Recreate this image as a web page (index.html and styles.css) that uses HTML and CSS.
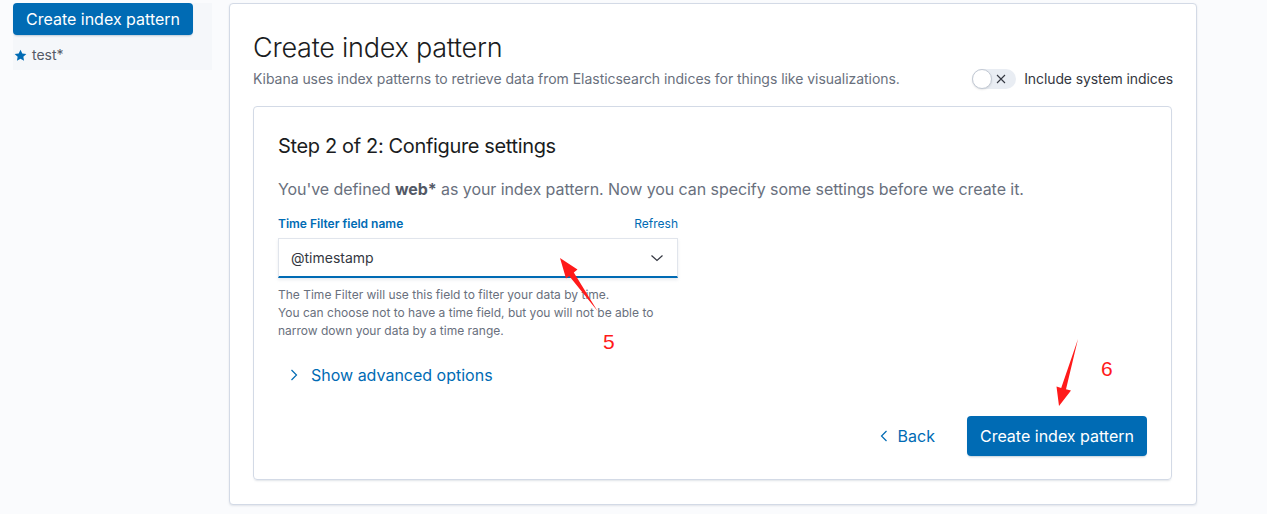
FILE: index.html
```html
<!DOCTYPE html>
<html lang="en">

<head>
    <meta charset="UTF-8">
    <title>Create index pattern</title>
    <link rel="stylesheet" href="styles.css">
</head>

<body>
    <div class="page">
        <aside class="sidebar">
            <button class="button button-small">Create index pattern</button>
            <div class="pattern-item">
                <svg class="star" width="13" height="13" viewBox="0 0 16 16">
                    <path d="M8 0.8l2.2 4.6 5 .6-3.7 3.5.9 5L8 12.1 3.6 14.5l.9-5L.8 6l5-.6z" fill="#006bb4"/>
                </svg>
                <span>test*</span>
            </div>
        </aside>

        <main class="panel">
            <div class="page-header">
                <div>
                    <h1 class="title">Create index pattern</h1>
                    <p class="subtitle">Kibana uses index patterns to retrieve data from Elasticsearch indices for things like visualizations.</p>
                </div>
                <label class="switch">
                    <span class="switch-track">
                        <span class="switch-knob"></span>
                        <svg class="switch-icon" width="12" height="12" viewBox="0 0 12 12">
                            <path d="M2 2l8 8M10 2l-8 8" stroke="#343741" stroke-width="1.1" fill="none"/>
                        </svg>
                    </span>
                    <span class="switch-label">Include system indices</span>
                </label>
            </div>

            <section class="step-panel">
                <h2 class="step-title">Step 2 of 2: Configure settings</h2>
                <p class="step-desc">You've defined <b>web*</b> as your index pattern. Now you can specify some settings before we create it.</p>

                <div class="form-row">
                    <div class="form-label-row">
                        <span class="form-label">Time Filter field name</span>
                        <a class="link-small">Refresh</a>
                    </div>
                    <div class="select">
                        <span>@timestamp</span>
                        <svg width="14" height="14" viewBox="0 0 14 14">
                            <path d="M1.5 4.5l5.5 5 5.5-5" stroke="#343741" stroke-width="1.2" fill="none"/>
                        </svg>
                    </div>
                    <div class="help">
                        The Time Filter will use this field to filter your data by time.<br>
                        You can choose not to have a time field, but you will not be able to<br>
                        narrow down your data by a time range.
                    </div>
                </div>

                <button class="button-empty advanced">
                    <svg width="16" height="16" viewBox="0 0 16 16">
                        <path d="M5.5 3l5 5-5 5" stroke="#006bb4" stroke-width="1.2" fill="none"/>
                    </svg>
                    <span>Show advanced options</span>
                </button>

                <div class="actions">
                    <button class="button-empty back">
                        <svg width="16" height="16" viewBox="0 0 16 16">
                            <path d="M10.5 3l-5 5 5 5" stroke="#006bb4" stroke-width="1.2" fill="none"/>
                        </svg>
                        <span>Back</span>
                    </button>
                    <button class="button">Create index pattern</button>
                </div>
            </section>
        </main>

        <!-- red marks drawn over the screenshot -->
        <svg class="marks" width="1267" height="514" viewBox="0 0 1267 514">
            <polygon points="560,258 577.5,269.5 573.8,272.6 597.5,311 569.2,276 566,278.6" fill="#ff1a1a"/>
            <polygon points="1059,406 1056.5,386.5 1061.2,387.9 1078,339 1066,389.3 1071,390.6" fill="#ff1a1a"/>
        </svg>
        <span class="mark-num mark-5">5</span>
        <span class="mark-num mark-6">6</span>
    </div>
</body>

</html>
```

FILE: styles.css
```css
* {
    padding: 0;
    margin: 0;
    box-sizing: border-box;
}

body {
    background: #fafbfd;
    font-family: Inter, "Noto Sans", sans-serif;
    color: #343741;
}

.page {
    position: relative;
    display: flex;
    align-items: flex-start;
    padding-top: 3px;
    height: 514px;
}

.sidebar {
    margin-left: 13px;
    width: 199px;
    height: 67px;
    background: #f5f7fa;
}

.button {
    height: 40px;
    padding: 0 13px;
    border: none;
    border-radius: 4px;
    background: #006bb4;
    color: #fff;
    font-family: inherit;
    font-size: 16px;
    font-weight: 400;
    box-shadow: 0 2px 2px -1px rgba(54, 97, 126, 0.3);
}

.button-small {
    display: block;
    width: 180px;
    height: 32px;
    padding: 0;
}

.pattern-item {
    display: flex;
    align-items: center;
    gap: 5px;
    margin-top: 10px;
    margin-left: 1px;
    font-size: 14px;
    line-height: 20px;
    color: #535966;
}

.panel {
    margin-left: 17px;
    width: 968px;
    height: 502px;
    padding: 24px 23px 0 23px;
    background: #fff;
    border: 1px solid #d3dae6;
    border-radius: 4px;
    box-shadow: 0 1px 2px rgba(152, 162, 179, 0.25);
}

.page-header {
    display: flex;
    justify-content: space-between;
    align-items: flex-end;
}

.title {
    font-size: 27px;
    line-height: 40px;
    font-weight: 300;
    letter-spacing: -0.25px;
    color: #1a1c21;
}

.subtitle {
    font-size: 14px;
    line-height: 21px;
    letter-spacing: -0.04px;
    color: #69707d;
}

.switch {
    display: flex;
    align-items: center;
    gap: 8px;
}

.switch-track {
    position: relative;
    display: flex;
    align-items: center;
    justify-content: flex-end;
    width: 44px;
    height: 20px;
    padding-right: 9px;
    border-radius: 10px;
    background: #e9edf3;
}

.switch-knob {
    position: absolute;
    left: 0;
    top: 0;
    width: 20px;
    height: 20px;
    border-radius: 50%;
    background: #fff;
    border: 1px solid #c2c9d4;
    box-shadow: 0 1px 2px rgba(0, 0, 0, 0.1);
}

.switch-label {
    font-size: 14px;
    line-height: 20px;
    letter-spacing: -0.1px;
    color: #343741;
}

.step-panel {
    margin-top: 17px;
    margin-right: 1px;
    height: 374px;
    padding: 27px 24px 0 24px;
    border: 1px solid #d3dae6;
    border-radius: 4px;
    box-shadow: 0 2px 2px -1px rgba(152, 162, 179, 0.3);
}

.step-title {
    font-size: 20px;
    line-height: 24px;
    font-weight: 400;
    letter-spacing: -0.35px;
    color: #1a1c21;
}

.step-desc {
    margin-top: 19px;
    font-size: 16px;
    line-height: 24px;
    letter-spacing: -0.07px;
    color: #69707d;
}

.step-desc b {
    font-weight: 700;
    color: #535966;
}

.form-row {
    width: 400px;
    margin-top: 14px;
}

.form-label-row {
    display: flex;
    justify-content: space-between;
    align-items: baseline;
    margin-bottom: 5px;
    font-size: 12px;
    line-height: 18px;
}

.form-label {
    font-weight: 600;
    color: #006bb4;
}

.link-small {
    color: #006bb4;
}

.select {
    display: flex;
    justify-content: space-between;
    align-items: center;
    height: 40px;
    padding: 0 13px 0 12px;
    background: #fff;
    border: 1px solid #e1e5ec;
    border-bottom: 2px solid #006bb4;
    box-shadow: 0 2px 3px rgba(152, 162, 179, 0.2);
    font-size: 14px;
}

.help {
    margin-top: 8px;
    font-size: 12px;
    line-height: 18px;
    color: #69707d;
}

.button-empty {
    display: flex;
    align-items: center;
    height: 40px;
    padding: 0 8px;
    border: none;
    background: transparent;
    color: #006bb4;
    font-family: inherit;
    font-size: 16px;
    line-height: 24px;
}

.advanced {
    gap: 9px;
    margin-top: 15px;
}

.actions {
    display: flex;
    justify-content: flex-end;
    align-items: center;
    gap: 24px;
    margin-top: 21px;
}

.back {
    gap: 6px;
}

.marks {
    position: absolute;
    left: 0;
    top: 0;
    pointer-events: none;
}

.mark-num {
    position: absolute;
    font-family: "Liberation Sans", sans-serif;
    font-size: 21px;
    line-height: 24px;
    color: #ff1a1a;
}

.mark-5 {
    left: 603px;
    top: 330px;
}

.mark-6 {
    left: 1101px;
    top: 357px;
}
```
